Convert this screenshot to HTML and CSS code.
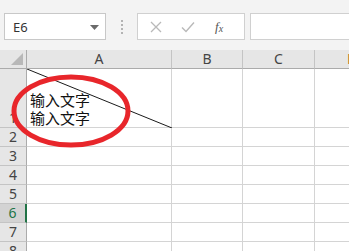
FILE: index.html
```html
<!DOCTYPE html>
<html>
<head>
<meta charset="utf-8">
<link rel="stylesheet" href="styles.css">
</head>
<body>
<div class="toolbar">
  <div class="namebox">
    <span class="name">E6</span>
    <svg class="caret" width="9" height="5" viewBox="0 0 9 5"><path d="M0 0h9L4.5 5z" fill="#6a6a6a"/></svg>
  </div>
  <div class="grip"><i></i><i></i><i></i><i></i></div>
  <div class="fbuttons">
    <svg class="btn" width="12" height="12" viewBox="0 0 12 12"><path d="M1 1L11 11M11 1L1 11" stroke="#b9b9b9" stroke-width="1.3" fill="none"/></svg>
    <svg class="btn" width="14" height="12" viewBox="0 0 14 12"><path d="M1 6.5L5 10.5L13 1.5" stroke="#b9b9b9" stroke-width="1.4" fill="none"/></svg>
    <span class="fx">f<sub>x</sub></span>
  </div>
  <div class="finput"></div>
</div>
<div class="sheet">
  <div class="corner"><svg width="12" height="12" viewBox="0 0 12 12"><path d="M12 0V12H0z" fill="#b8b8b8"/></svg></div>
  <div class="ch">A</div>
  <div class="ch">B</div>
  <div class="ch">C</div>
  <div class="ch d">D</div>

  <div class="rh">1</div>
  <div class="cell a1">
    <svg class="diag" viewBox="0 0 145 59" preserveAspectRatio="none"><line x1="0" y1="0" x2="145" y2="59" stroke="#1a1a1a" stroke-width="1"/></svg>
    <div class="txt">输入文字<br>输入文字</div>
  </div>
  <div class="cell"></div><div class="cell"></div><div class="cell"></div>

  <div class="rh">2</div><div class="cell"></div><div class="cell"></div><div class="cell"></div><div class="cell"></div>
  <div class="rh">3</div><div class="cell"></div><div class="cell"></div><div class="cell"></div><div class="cell"></div>
  <div class="rh">4</div><div class="cell"></div><div class="cell"></div><div class="cell"></div><div class="cell"></div>
  <div class="rh">5</div><div class="cell"></div><div class="cell"></div><div class="cell"></div><div class="cell"></div>
  <div class="rh active">6</div><div class="cell"></div><div class="cell"></div><div class="cell"></div><div class="cell"></div>
  <div class="rh">7</div><div class="cell"></div><div class="cell"></div><div class="cell"></div><div class="cell"></div>
  <div class="rh">8</div><div class="cell"></div><div class="cell"></div><div class="cell"></div><div class="cell"></div>

  <svg class="ring" width="124" height="76" viewBox="0 0 124 76"><ellipse cx="62" cy="38" rx="57" ry="34" fill="none" stroke="#e8262b" stroke-width="5"/></svg>
</div>
</body>
</html>
```

FILE: styles.css
```css
* { box-sizing: border-box; }
html, body { margin: 0; padding: 0; }
body {
  width: 349px;
  height: 251px;
  overflow: hidden;
  background: #ffffff;
  font-family: "Noto Sans", "Liberation Sans", "Noto Sans CJK SC", sans-serif;
  color: #444444;
}
.toolbar {
  height: 50px;
  background: #f3f3f3;
  display: flex;
  align-items: flex-start;
  padding: 13px 0 0 4px;
}
.namebox {
  width: 102px;
  height: 27px;
  background: #ffffff;
  border: 1px solid #c8c8c8;
  display: flex;
  align-items: center;
  justify-content: space-between;
  padding: 0 6px 0 8px;
}
.name { font-size: 13px; color: #333; }
.caret { margin-top: 1px; }
.grip {
  width: 31px;
  height: 27px;
  display: flex;
  flex-direction: column;
  align-items: center;
  justify-content: center;
  gap: 2px;
}
.grip i {
  display: block;
  width: 2px;
  height: 2px;
  background: #b3b3b3;
}
.fbuttons {
  width: 108px;
  height: 27px;
  background: #ffffff;
  border: 1px solid #d0d0d0;
  display: flex;
  align-items: center;
  padding: 0 0 0 12px;
}
.fbuttons .btn:first-child { margin-right: 19px; }
.fbuttons .btn:nth-child(2) { margin-right: 20px; }
.fx {
  font-family: "Liberation Serif", serif;
  font-style: italic;
  font-size: 13px;
  color: #555;
}
.fx sub { font-size: 10px; vertical-align: -1px; }
.finput {
  margin-left: 5px;
  flex: 1;
  height: 27px;
  background: #ffffff;
  border: 1px solid #d0d0d0;
  border-right: none;
}
.sheet {
  position: relative;
  display: grid;
  grid-template-columns: 27px 145px 71px 72px 72px;
  grid-template-rows: 19px 59px repeat(7, 19px);
}
.corner {
  background: #e6e6e6;
  border-right: 1px solid #ababab;
  border-bottom: 1px solid #ababab;
  display: flex;
  align-items: flex-end;
  justify-content: flex-end;
  padding: 0 3px 3px 0;
}
.ch {
  background: #e6e6e6;
  border-right: 1px solid #c4c4c4;
  border-bottom: 1px solid #ababab;
  font-size: 14px;
  line-height: 18px;
  text-align: center;
  color: #444;
}
.ch.d {
  color: #b5722c;
  text-align: left;
  padding-left: 32px;
}
.rh {
  background: #e6e6e6;
  border-right: 1px solid #ababab;
  border-bottom: 1px solid #c4c4c4;
  font-size: 14px;
  line-height: 18px;
  display: flex;
  align-items: flex-end;
  justify-content: center;
  color: #444;
}
.rh.active {
  background: #d3d3d3;
  color: #217346;
  border-right: 2px solid #217346;
}
.cell {
  border-right: 1px solid #d4d4d4;
  border-bottom: 1px solid #d4d4d4;
}
.a1 {
  position: relative;
  display: flex;
  align-items: flex-end;
  padding: 0 0 0 3px;
}
.diag {
  position: absolute;
  left: 0;
  top: 0;
  width: 145px;
  height: 59px;
}
.txt {
  position: relative;
  font-family: "Noto Sans CJK SC", sans-serif;
  font-size: 15px;
  line-height: 18px;
  color: #111;
}
.ring {
  position: absolute;
  left: 9px;
  top: 23px;
}
```
